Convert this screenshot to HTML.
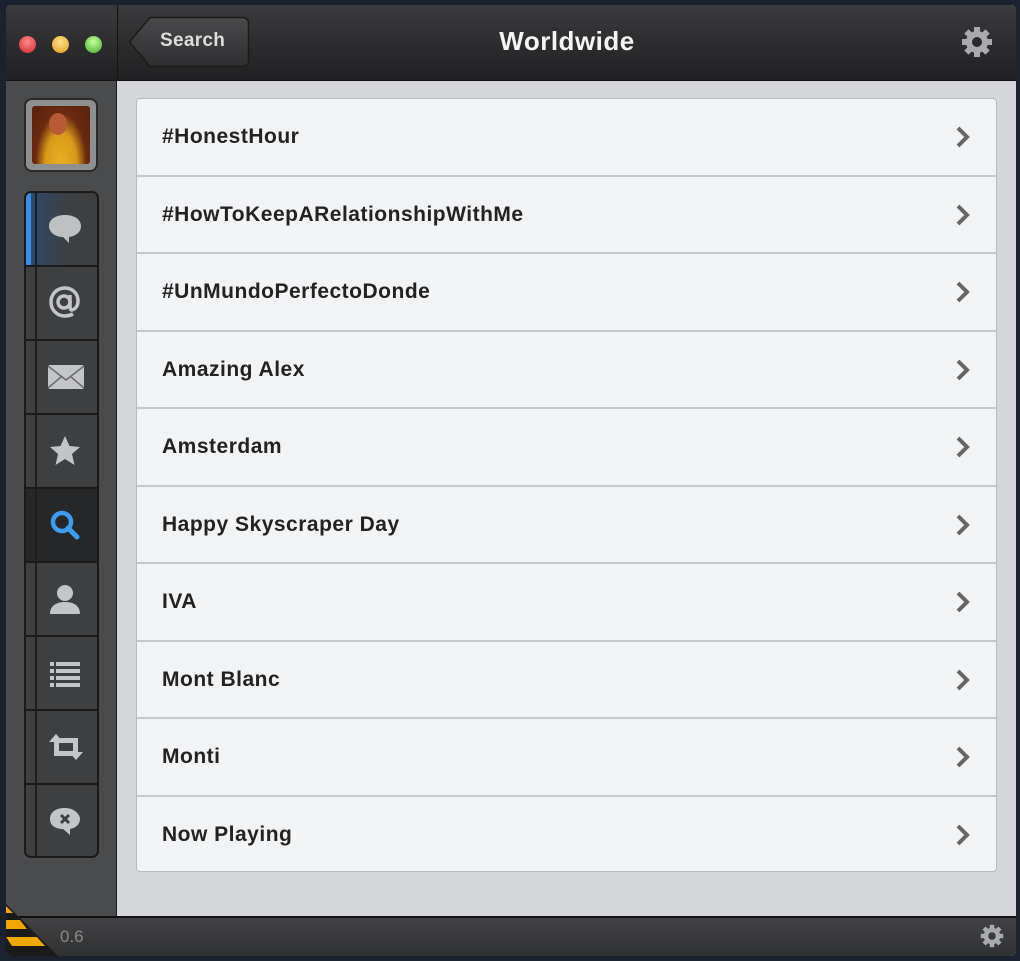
<!DOCTYPE html>
<html><head><meta charset="utf-8"><style>
*{box-sizing:border-box;margin:0;padding:0}
body{width:1020px;height:961px;background:#1a2230;position:relative;overflow:hidden;font-family:"Liberation Sans",sans-serif}
#win{position:absolute;left:6px;top:5px;width:1010px;height:951px;background:#d4d6d9;border-radius:5px;overflow:hidden}
#hdr{position:absolute;left:0;top:0;width:1010px;height:76px;background:linear-gradient(#3b3b3d,#202022);border-bottom:1px solid #111}
#hdr .sep{position:absolute;left:111px;top:0;width:1px;height:76px;background:#151515}
.dot{position:absolute;top:31px;width:17px;height:17px;border-radius:50%}
#back{position:absolute;left:122px;top:11px;width:122px;height:52px}
#back span{position:absolute;left:32px;top:0;line-height:50px;color:#ddd;font-weight:bold;font-size:19px;letter-spacing:.3px}
#title{position:absolute;left:0;right:0;top:0;text-align:center;line-height:72px;color:#f4f4f4;font-weight:bold;font-size:26px;padding-left:112px;letter-spacing:.5px}
#side{position:absolute;left:0;top:76px;width:111px;height:835px;background:#4a4b4d;border-right:1px solid #1a1a1a}
#av{position:absolute;left:18px;top:17px;width:74px;height:74px;border-radius:8px;background:#8e8f91;border:2px solid #2a2a2a;padding:6px}
#av div{width:100%;height:100%;border-radius:3px;background:radial-gradient(ellipse at 50% 100%,#e8b020 0,#d99a1a 38%,#6a2a10 62%,#5a200c 100%);position:relative}
#grp{position:absolute;left:18px;top:110px;width:75px;height:667px;border:2px solid #1a1a1a;border-radius:7px;overflow:hidden;background:#3e3f41}
.btn{position:absolute;left:0;width:71px;height:74px;border-bottom:2px solid #1a1a1a}
.btn:before{content:"";position:absolute;left:9px;top:0;width:2px;height:100%;background:#1e1e1e}
.btn svg{position:absolute;left:20px;top:17px}
#list{position:absolute;left:130px;top:93px;width:861px;height:774px;background:#f2f3f5;border:1px solid #b8babd;border-radius:4px}
.row{height:77.5px;border-bottom:2px solid #c6c8cb;position:relative;font-weight:bold;font-size:21px;color:#222;line-height:75px;padding-left:25px;letter-spacing:.5px}
.row:last-child{border-bottom:none}
.row svg{position:absolute;right:26px;top:27px}
#bot{position:absolute;left:0;top:911px;width:1010px;height:40px;background:linear-gradient(#414244,#303133);border-top:2px solid #111}
</style></head><body>
<div id="win">
<div id="hdr"><div class="sep"></div>
<div class="dot" style="left:13px;background:radial-gradient(circle at 50% 35%,#ff8a8a,#d0232a)"></div>
<div class="dot" style="left:46px;background:radial-gradient(circle at 50% 35%,#ffe08a,#e79a1a)"></div>
<div class="dot" style="left:79px;background:radial-gradient(circle at 50% 35%,#c8ff9a,#3faa2a)"></div>
<div id="back"><svg width="122" height="52" viewBox="0 0 122 52"><defs><linearGradient id="bg" x1="0" y1="0" x2="0" y2="1"><stop offset="0" stop-color="#4a4a4c"/><stop offset="1" stop-color="#2e2e30"/></linearGradient></defs><path d="M1.5 26L22 1.5H115a5.5 5.5 0 0 1 5.5 5.5V45a5.5 5.5 0 0 1-5.5 5.5H22z" fill="url(#bg)" stroke="#1b1b1b" stroke-width="1.5"/></svg><span>Search</span></div>
<div id="title">Worldwide</div>
<svg style="position:absolute;left:955px;top:21px" width="32" height="32" viewBox="0 0 32 32"><g fill="#a9aaac"><circle cx="16" cy="16" r="11"/><g id="t"><rect x="13" y="1" width="6" height="7"/></g><use href="#t" transform="rotate(45 16 16)"/><use href="#t" transform="rotate(90 16 16)"/><use href="#t" transform="rotate(135 16 16)"/><use href="#t" transform="rotate(180 16 16)"/><use href="#t" transform="rotate(225 16 16)"/><use href="#t" transform="rotate(270 16 16)"/><use href="#t" transform="rotate(315 16 16)"/></g><circle cx="16" cy="16" r="5" fill="#2a2a2c"/></svg>
</div>
<div id="side">
<div id="av"><div><div style="position:absolute;left:17px;top:7px;width:18px;height:22px;border-radius:50%;background:#b85a38"></div></div></div>
<div id="grp">
<div class="btn" style="top:0;background:linear-gradient(90deg,#2a4a70,#3e3f41 60%)"><div style="position:absolute;left:0;top:0;width:5px;height:72px;background:#3a8ee8"></div><svg width="38" height="38" viewBox="0 0 38 38"><path d="M19 5C9 5 3 10 3 16s6 11 14 11l6 6v-6c7-1 12-5 12-11S29 5 19 5z" fill="#bfc0c2"/></svg></div>
<div class="btn" style="top:74px"><svg width="38" height="38" viewBox="0 0 38 38"><path d="M25 26c3 0 7-3 7-9 0-8-6-13-13-13C11 4 5 10 5 18s6 14 14 14c3 0 6-1 8-2" fill="none" stroke="#c4c5c7" stroke-width="3.5"/><circle cx="18" cy="18" r="6" fill="none" stroke="#c4c5c7" stroke-width="3.5"/><path d="M24 11v11c0 3 1 4 2 4" fill="none" stroke="#c4c5c7" stroke-width="3.5"/></svg></div>
<div class="btn" style="top:148px"><svg width="40" height="38" viewBox="0 0 40 38"><rect x="2" y="7" width="36" height="24" rx="2" fill="#c4c5c7"/><path d="M2 8l18 14L38 8M2 30l13-11M38 30L25 19" stroke="#6a6b6d" stroke-width="1.5" fill="none"/></svg></div>
<div class="btn" style="top:222px"><svg width="38" height="38" viewBox="0 0 38 38"><path d="M19 4l4.5 10 10.5 1-8 7 2.5 11-9.5-6-9.5 6 2.5-11-8-7 10.5-1z" fill="#c4c5c7"/></svg></div>
<div class="btn" style="top:296px;background:#262729"><svg width="38" height="38" viewBox="0 0 38 38"><circle cx="16" cy="16" r="9" stroke="#3d9ef0" stroke-width="4.5" fill="none"/><path d="M22 22l9 9" stroke="#3d9ef0" stroke-width="5" stroke-linecap="round"/></svg></div>
<div class="btn" style="top:370px"><svg width="38" height="38" viewBox="0 0 38 38"><circle cx="19" cy="13" r="8" fill="#c4c5c7"/><path d="M4 34c0-8 6-12 15-12s15 4 15 12z" fill="#c4c5c7"/></svg></div>
<div class="btn" style="top:444px"><svg width="38" height="38" viewBox="0 0 38 38"><g fill="#c4c5c7"><rect x="4" y="8" width="4" height="4"/><rect x="4" y="15" width="4" height="4"/><rect x="4" y="22" width="4" height="4"/><rect x="4" y="29" width="4" height="4"/><rect x="10" y="8" width="24" height="4"/><rect x="10" y="15" width="24" height="4"/><rect x="10" y="22" width="24" height="4"/><rect x="10" y="29" width="24" height="4"/></g></svg></div>
<div class="btn" style="top:518px"><svg width="40" height="38" viewBox="0 0 40 38"><path d="M8 28V14H3l7-8 7 8h-4v9h14v5zM32 10v14h5l-7 8-7-8h4v-9H13v-5z" fill="#c4c5c7"/></svg></div>
<div class="btn" style="top:592px;border-bottom:none"><svg width="38" height="38" viewBox="0 0 38 38"><path d="M19 6C10 6 4 10 4 17s6 10 13 10l7 6v-6c6-1 10-5 10-10S28 6 19 6z" fill="#c4c5c7"/><path d="M15 13l8 8M23 13l-8 8" stroke="#3e3f41" stroke-width="3"/></svg></div>
</div>
</div>
<div id="list">
<div class="row">#HonestHour<svg width="14" height="22" viewBox="0 0 14 22"><path d="M2 2l9 9-9 9" stroke="#666" stroke-width="4" fill="none"/></svg></div>
<div class="row">#HowToKeepARelationshipWithMe<svg width="14" height="22" viewBox="0 0 14 22"><path d="M2 2l9 9-9 9" stroke="#666" stroke-width="4" fill="none"/></svg></div>
<div class="row">#UnMundoPerfectoDonde<svg width="14" height="22" viewBox="0 0 14 22"><path d="M2 2l9 9-9 9" stroke="#666" stroke-width="4" fill="none"/></svg></div>
<div class="row">Amazing Alex<svg width="14" height="22" viewBox="0 0 14 22"><path d="M2 2l9 9-9 9" stroke="#666" stroke-width="4" fill="none"/></svg></div>
<div class="row">Amsterdam<svg width="14" height="22" viewBox="0 0 14 22"><path d="M2 2l9 9-9 9" stroke="#666" stroke-width="4" fill="none"/></svg></div>
<div class="row">Happy Skyscraper Day<svg width="14" height="22" viewBox="0 0 14 22"><path d="M2 2l9 9-9 9" stroke="#666" stroke-width="4" fill="none"/></svg></div>
<div class="row">IVA<svg width="14" height="22" viewBox="0 0 14 22"><path d="M2 2l9 9-9 9" stroke="#666" stroke-width="4" fill="none"/></svg></div>
<div class="row">Mont Blanc<svg width="14" height="22" viewBox="0 0 14 22"><path d="M2 2l9 9-9 9" stroke="#666" stroke-width="4" fill="none"/></svg></div>
<div class="row">Monti<svg width="14" height="22" viewBox="0 0 14 22"><path d="M2 2l9 9-9 9" stroke="#666" stroke-width="4" fill="none"/></svg></div>
<div class="row">Now Playing<svg width="14" height="22" viewBox="0 0 14 22"><path d="M2 2l9 9-9 9" stroke="#666" stroke-width="4" fill="none"/></svg></div>
</div>
<div id="bot">
<svg style="position:absolute;left:0;top:-14px" width="52" height="52" viewBox="0 0 52 52"><path d="M0 0L52 52H0z" fill="#1a1a1a"/><path d="M0 2l7 7H0zM0 16h14l7 9H0zM0 33h31l8 9H6z" fill="#f0a800"/></svg>
<div style="position:absolute;left:54px;top:9px;color:#888;font-size:17px">0.6</div>
<svg style="position:absolute;left:974px;top:6px" width="24" height="24" viewBox="0 0 32 32"><g fill="#a9aaac"><circle cx="16" cy="16" r="11"/><rect x="13" y="1" width="6" height="7"/><rect x="13" y="1" width="6" height="7" transform="rotate(45 16 16)"/><rect x="13" y="1" width="6" height="7" transform="rotate(90 16 16)"/><rect x="13" y="1" width="6" height="7" transform="rotate(135 16 16)"/><rect x="13" y="1" width="6" height="7" transform="rotate(180 16 16)"/><rect x="13" y="1" width="6" height="7" transform="rotate(225 16 16)"/><rect x="13" y="1" width="6" height="7" transform="rotate(270 16 16)"/><rect x="13" y="1" width="6" height="7" transform="rotate(315 16 16)"/></g><circle cx="16" cy="16" r="5" fill="#38393b"/></svg>
</div>
</div>
</body></html>
